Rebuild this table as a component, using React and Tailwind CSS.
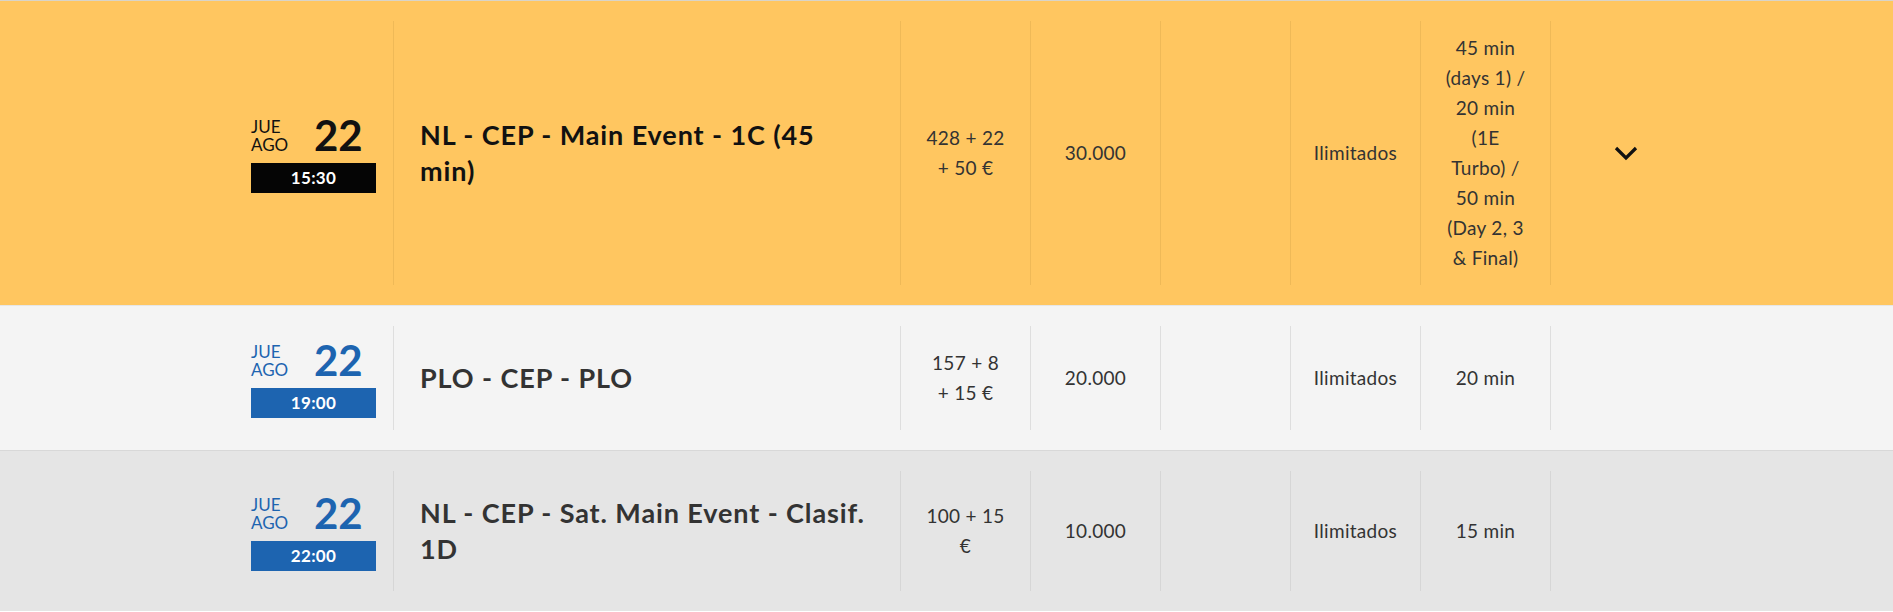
import React from "react";

const rows = [
  {
    theme: "gold",
    time: "15:30",
    title: ["NL - CEP - Main Event - 1C (45", "min)"],
    buyin: ["428 + 22", "+ 50 €"],
    stack: "30.000",
    players: "Ilimitados",
    levels: ["45 min", "(days 1) /", "20 min", "(1E", "Turbo) /", "50 min", "(Day 2, 3", "& Final)"],
    expand: true,
  },
  {
    theme: "light",
    time: "19:00",
    title: ["PLO - CEP - PLO"],
    buyin: ["157 + 8", "+ 15 €"],
    stack: "20.000",
    players: "Ilimitados",
    levels: ["20 min"],
    expand: false,
  },
  {
    theme: "mid",
    time: "22:00",
    title: ["NL - CEP - Sat. Main Event - Clasif.", "1D"],
    buyin: ["100 + 15", "€"],
    stack: "10.000",
    players: "Ilimitados",
    levels: ["15 min"],
    expand: false,
  },
];

const themes = {
  gold: {
    row: "bg-[#ffc660] border-[#d9d4c8]",
    div: "border-[#efb957]",
    title: "text-[#111111]",
    date: "text-[#111111]",
    bar: "bg-[#050505]",
  },
  light: {
    row: "bg-[#f4f4f4] border-[#e6e6e6]",
    div: "border-[#dedede]",
    title: "text-[#333333]",
    date: "text-[#1d64b0]",
    bar: "bg-[#1d64b0]",
  },
  mid: {
    row: "bg-[#e5e5e5] border-[#d8d8d8]",
    div: "border-[#d6d6d6]",
    title: "text-[#333333]",
    date: "text-[#1d64b0]",
    bar: "bg-[#1d64b0]",
  },
};

function Lines({ lines }) {
  return lines.map((l, i) => (
    <span key={i} className="block whitespace-nowrap">
      {l}
    </span>
  ));
}

function DateBlock({ t, time }) {
  return (
    <div className={`w-[125px] ${t.date}`}>
      <div className="flex items-end">
        <div className="w-[63px] mb-[2px] text-[17px] leading-[18px]">
          <span className="block">JUE</span>
          <span className="block">AGO</span>
        </div>
        <div className="text-[42px] leading-[42px] font-bold">22</div>
      </div>
      <div
        className={`mt-[7px] h-[30px] ${t.bar} text-white text-[17px] tracking-[0.3px] font-bold leading-[30px] text-center`}
      >
        {time}
      </div>
    </div>
  );
}

function Chevron() {
  return (
    <svg width="26" height="17" viewBox="0 0 26 17" fill="none">
      <polyline
        points="3,3 13,13 23,3"
        stroke="#111"
        strokeWidth="3.2"
        strokeLinecap="butt"
        strokeLinejoin="miter"
      />
    </svg>
  );
}

function Row({ r }) {
  const t = themes[r.theme];
  const cell = `w-[130px] shrink-0 border-l ${t.div} flex items-center justify-center text-center text-[19px] tracking-[0.3px] leading-[30px] text-[#333333] py-3`;
  return (
    <div className={`flex border-t py-5 pl-[251px] ${t.row}`}>
      <div className="w-[142px] shrink-0 flex items-center pt-[13px] pb-[12px]">
        <DateBlock t={t} time={r.time} />
      </div>
      <div
        className={`w-[507px] shrink-0 border-l ${t.div} px-[26px] py-6 flex items-center text-[27px] tracking-[0.9px] font-bold leading-[36px] ${t.title}`}
      >
        <div>
          <Lines lines={r.title} />
        </div>
      </div>
      <div className={cell}>
        <div>
          <Lines lines={r.buyin} />
        </div>
      </div>
      <div className={cell}>{r.stack}</div>
      <div className={cell}></div>
      <div className={cell}>{r.players}</div>
      <div className={cell}>
        <div>
          <Lines lines={r.levels} />
        </div>
      </div>
      <div className={`w-[150px] shrink-0 border-l ${t.div} flex items-center justify-center`}>
        {r.expand ? <Chevron /> : null}
      </div>
    </div>
  );
}

export default function App() {
  return (
    <div className="w-[1893px] h-[612px] overflow-hidden bg-white font-['Lato',sans-serif]">
      {rows.map((r, i) => (
        <Row key={i} r={r} />
      ))}
    </div>
  );
}
